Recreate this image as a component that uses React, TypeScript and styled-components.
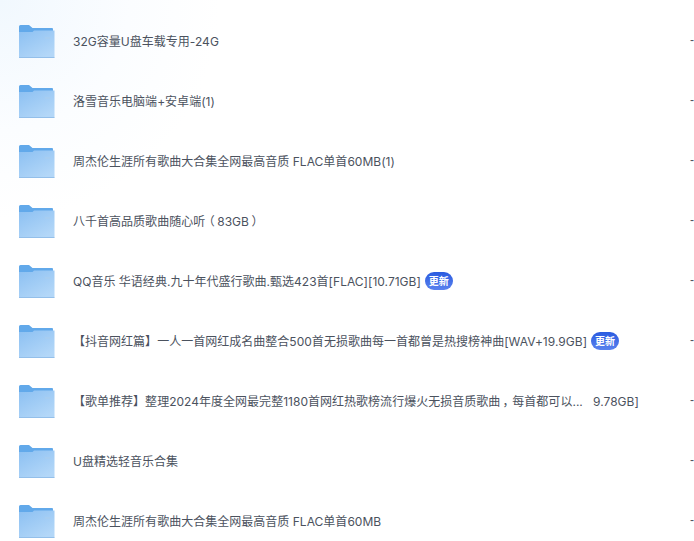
import React from 'react'
import styled, { createGlobalStyle } from 'styled-components'

interface iFolderRow {
  name: React.ReactNode
  isNew?: boolean
}

const GlobalStyle = createGlobalStyle`
  html, body {
    margin: 0;
    padding: 0;
    background: #fff;
    overflow: hidden;
  }
`

const Page = styled.div`
  width: 694px;
  height: 541px;
  overflow: hidden;
  padding-top: 11px;
  box-sizing: border-box;
  background: radial-gradient(circle at 0 0, #f1f8fe 0, #fbfdff 130px, #fff 220px);
  font-family: 'Inter', 'Noto Sans CJK SC', sans-serif;
`

const Row = styled.div`
  display: grid;
  grid-template-columns: 54px 1fr 4px;
  align-items: center;
  height: 60px;
  padding-left: 19px;
`

const Name = styled.div`
  display: flex;
  align-items: center;
  gap: 4px;
  font-size: 12px;
  color: #4b525e;
  white-space: nowrap;
`

const NameText = styled.span`
  padding-bottom: 2px;
  letter-spacing: 0.02px;
`

// parens and the comma sit centred in their cell in the reference
const Punct = styled.span`
  display: inline-block;
  width: 12px;
  text-align: center;
  font-feature-settings: 'palt';
`

const Badge = styled.span`
  width: 28px;
  height: 18px;
  border-radius: 9px;
  background: linear-gradient(180deg, #2a5be0, #5a82ee);
  color: #fff;
  font-size: 10px;
  font-weight: 700;
  line-height: 18px;
  text-align: center;
`

const Size = styled.div`
  font-family: 'Liberation Sans', sans-serif;
  font-size: 12px;
  color: #4b525e;
  padding-bottom: 2px;
`

const FolderSvg = styled.svg`
  display: block;
  margin-top: 1px;
`

const rows: iFolderRow[] = [
  { name: '32G容量U盘车载专用-24G' },
  { name: '洛雪音乐电脑端+安卓端(1)' },
  { name: '周杰伦生涯所有歌曲大合集全网最高音质 FLAC单首60MB(1)' },
  { name: <>八千首高品质歌曲随心听<Punct>（</Punct>83GB<Punct>）</Punct></> },
  { name: 'QQ音乐 华语经典.九十年代盛行歌曲.甄选423首[FLAC][10.71GB]', isNew: true },
  { name: '【抖音网红篇】一人一首网红成名曲整合500首无损歌曲每一首都曾是热搜榜神曲[WAV+19.9GB]', isNew: true },
  {
    name: <>【歌单推荐】整理2024年度全网最完整1180首网红热歌榜流行爆火无损音质歌曲<Punct>，</Punct>每首都可以...{'\u00a0\u00a0 '}9.78GB]</>,
  },
  { name: 'U盘精选轻音乐合集' },
  { name: '周杰伦生涯所有歌曲大合集全网最高音质 FLAC单首60MB' },
]

const FolderIcon = () => (
  <FolderSvg width="36" height="33" viewBox="0 0 36 33">
    <defs>
      <linearGradient id="folderFront" x1="0" y1="0" x2="0.7" y2="1">
        <stop offset="0" stopColor="#8cc0f2" />
        <stop offset="1" stopColor="#b3d7f8" />
      </linearGradient>
    </defs>
    <path d="M0 1.500A1.500 1.500 0 0 1 1.500 0H10l3.500 3H33a1 1 0 0 1 1 1v4H0z" fill="#62a9ea" />
    <path d="M0 7h13.500l1.500-1.500H35.500V32.500H0z" fill="url(#folderFront)" />
    <path d="M0 32h35.500v1H0z" fill="#93bfea" />
    <path d="M26 12h5v2h-5z" fill="#a6cdf1" />
  </FolderSvg>
)

const App = () => (
  <Page>
    <GlobalStyle />
    {rows.map((row, i) => (
      <Row key={i}>
        <FolderIcon />
        <Name>
          <NameText>{row.name}</NameText>
          {row.isNew && <Badge>更新</Badge>}
        </Name>
        <Size>-</Size>
      </Row>
    ))}
  </Page>
)

export default App
